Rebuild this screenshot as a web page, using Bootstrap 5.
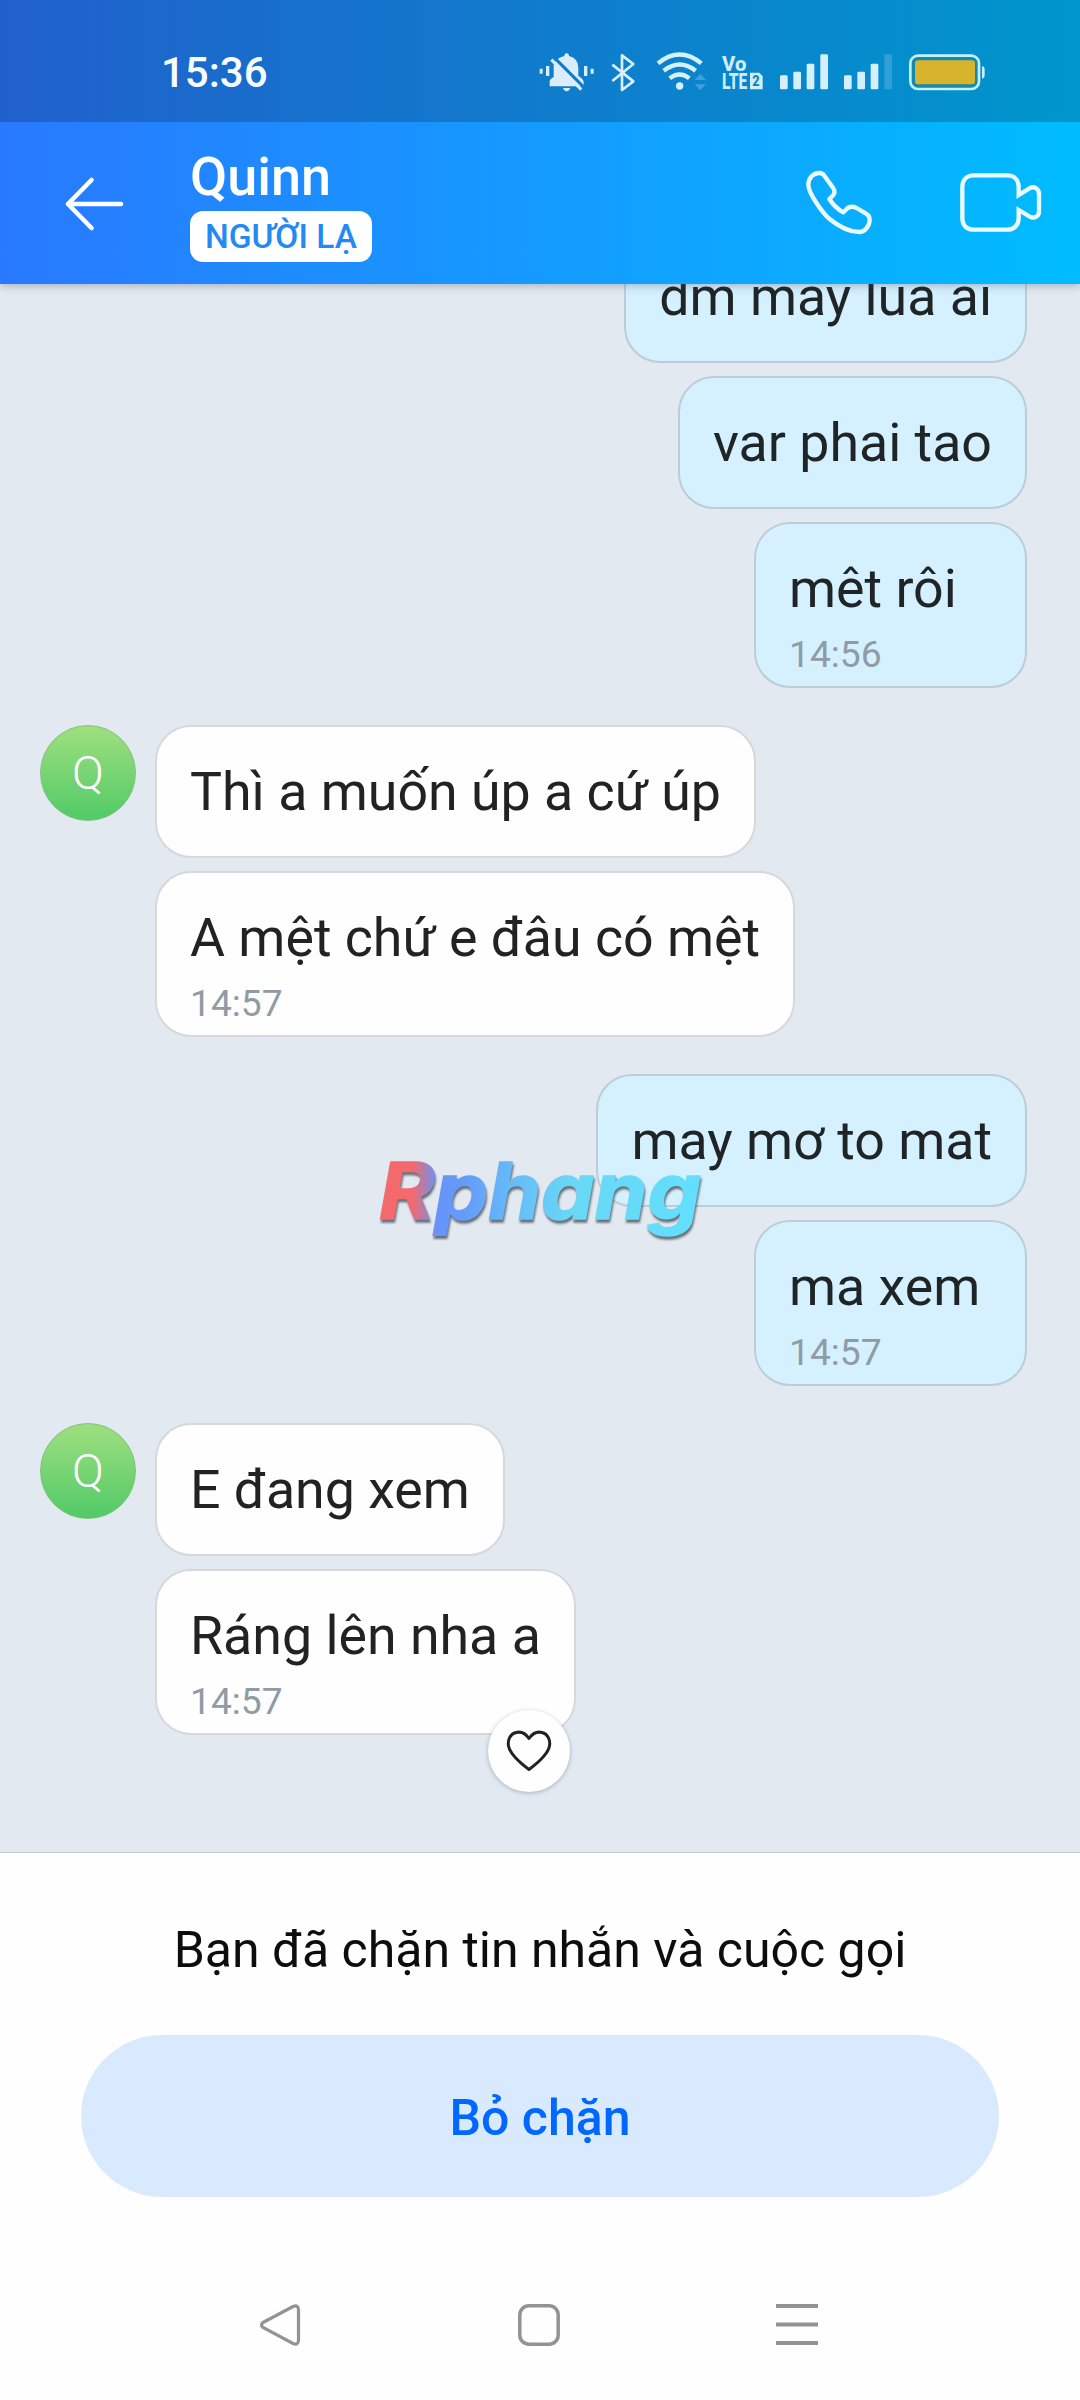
<!DOCTYPE html>
<html lang="vi">
<head>
<meta charset="utf-8">
<meta name="viewport" content="width=device-width, initial-scale=1">
<title>Quinn</title>
<link href="https://cdn.jsdelivr.net/npm/bootstrap@5.3.0/dist/css/bootstrap.min.css" rel="stylesheet">
<style>
  body { width: 1080px; height: 2400px; overflow: hidden; font-family: Roboto, "Noto Sans", sans-serif; background: #fefefe; }
  svg { display: block; flex: none; overflow: visible; }
  .app-top { background: linear-gradient(90deg, #2979ff, #00bcff); box-shadow: 0 2px 8px rgba(60, 80, 100, .35); z-index: 2; }
  .status-bar { height: 122px; background: rgba(0, 0, 0, .2); padding: 22px 95px 0 161px; }
  .clock { font-size: 42px; font-weight: 500; line-height: 50px; padding-top: 2px; color: #f8fdff; }
  .status-icons svg { height: 40px; }
  .chat-header { height: 162px; padding: 0 38px 0 64px; }
  .peer-name { font-size: 54px; font-weight: 500; line-height: 60px; margin-top: 25px; }
  .stranger-tag { width: 182px; height: 51px; border-radius: 13px; font-size: 33.5px; font-weight: 500; line-height: 52px; color: #2389f3; margin-top: 4px; }
  .chat-area { height: 1569px; background: #e2e9f1; padding: 0 53px 117px 40px; gap: 37px; border-bottom: 1px solid #c4cacf; }
  .chat-area > * { flex: none; }
  .bubbles { gap: 13px; }
  .bubble { border: 2px solid #d6d8da; border-radius: 36px; background: #fefefe; padding: 33px; font-size: 53.7px; line-height: 63px; color: #222; white-space: nowrap; }
  .bubble.sent { background: #d5f0ff; border-color: #bccdd8; color: #1f2426; }
  .bubble.timed { padding-bottom: 10px; min-width: 273px; }
  .stamp { font-size: 37.2px; line-height: 44px; margin-top: 12px; color: #8f9ba5; }
  .avatar { width: 96px; height: 96px; margin-right: 19px; background: linear-gradient(#9fdf7f, #52ca68); border: 1px solid #80c47c; font-size: 47px; font-weight: 300; line-height: 94px; flex: none; }
  .react { position: absolute; right: 6px; bottom: -57px; width: 82px; height: 82px; background: #fefefe; box-shadow: 0 1px 4px rgba(50, 70, 100, .35); }
  .watermark { position: absolute; left: 370px; top: 1145px; z-index: 1; filter: drop-shadow(1px 3px 1px rgba(50, 60, 70, .7)); }
  .blocked-panel { height: 343px; padding: 0 81px; }
  .blocked-note { font-size: 50px; line-height: 60px; margin-top: 67px; margin-bottom: 55px; color: #0d0d0d; }
  .unblock { height: 162px; background: #daeafe; color: #0068ff; font-size: 50px; font-weight: 500; border: 0; padding: 5px 0 0; }
  .unblock:hover { background: #daeafe; color: #0068ff; }
  .nav-keys { height: 203px; padding: 107px 262px 0 259px; }
</style>
</head>
<body class="d-flex flex-column position-relative">

<header class="app-top position-relative">
  <div class="status-bar d-flex align-items-center justify-content-between">
    <div class="clock">15:36</div>
    <div class="status-icons d-flex">
      <svg width="57" viewBox="25 65 171 120" fill="#d9edfb">
        <path d="M30 115h9v15h-9zM49 107h10v30h-10zM163 107h10v30h-10zM183 115h9v15h-9z"/>
        <path d="M72 103 Q80 82 104 77 Q104 69 111 69 Q118 69 118 77 Q146 84 146 112 V137 Q160 145 162 155 V168 H60 V152 Q60 148 72 140 Z"/>
        <path d="M100 173h22q-4 10-11 10t-11-10z"/>
        <path d="M71 79 L163 171" stroke="#0e7ccb" stroke-width="9"/>
        <path d="M65 88 L155 178" stroke="#d9edfb" stroke-width="9"/>
      </svg>
      <svg width="25" style="margin-left:16px" viewBox="244 65 75 120" fill="none" stroke="#d9f0fb" stroke-width="8">
        <path d="M248 103 L311 153 L277 179 V75 L311 101 L248 152" stroke-linejoin="round"/>
      </svg>
      <svg width="51" style="margin-left:20px" viewBox="379 65 153 120" fill="none" stroke="#d3f2fd" stroke-width="13">
        <path d="M385 99 Q450 46 515 99M402 121 Q450 84 498 121M420 144 Q450 121 479 144"/>
        <circle cx="450" cy="167" r="11" fill="#d3f2fd" stroke="none"/>
        <path d="M495 149l17-18 17 18zM495 162h34l-17 18z" fill="#3f9fdb" stroke="none"/>
      </svg>
      <svg width="42" style="margin-left:15px" viewBox="577 65 126 120" fill="#cdeefb" font-family="Roboto, sans-serif" font-weight="800">
        <text x="577" y="122" font-size="63" textLength="73" lengthAdjust="spacingAndGlyphs">Vo</text>
        <text x="577" y="177" font-size="66" textLength="76" lengthAdjust="spacingAndGlyphs">LTE</text>
        <path d="M661 127h28l10 11v39h-38z"/>
        <text x="668" y="168" font-size="46" textLength="22" lengthAdjust="spacingAndGlyphs" fill="#0d7fbd">2</text>
      </svg>
      <svg width="48" style="margin-left:16px" viewBox="750 65 144 120" fill="#d6effc">
        <rect x="750" y="135" width="23" height="42" rx="4"/><rect x="790" y="124" width="23" height="53" rx="4"/>
        <rect x="830" y="100" width="23" height="77" rx="4"/><rect x="871" y="72" width="23" height="105" rx="4"/>
      </svg>
      <svg width="48" style="margin-left:16px" viewBox="942 65 144 120" fill="#d6effc">
        <rect x="942" y="135" width="23" height="42" rx="4"/><rect x="982" y="124" width="23" height="53" rx="4"/>
        <rect x="1022" y="100" width="23" height="77" rx="4"/><rect x="1063" y="72" width="23" height="105" rx="4" fill="#2f9fd8"/>
      </svg>
      <svg width="76" style="margin-left:17px" viewBox="1137 65 228 120">
        <rect x="1141" y="76" width="206" height="100" rx="23" fill="#1789ab" stroke="#c3f1fd" stroke-width="8"/>
        <rect x="1155" y="90" width="180" height="72" rx="9" fill="#d8b42c"/>
        <path d="M1356 107q8 2 8 9v20q0 7-8 9z" fill="#c3f1fd"/>
      </svg>
    </div>
  </div>
  <div class="chat-header d-flex text-white">
    <svg width="60" height="54" style="margin-top:55px" viewBox="0 0 60 54" fill="none" stroke="#fff" stroke-width="4.6" stroke-linecap="round" stroke-linejoin="round"><path d="M57 27H4M27.500 3L4 27L27.500 51"/></svg>
    <div style="margin-left:66px">
      <div class="peer-name">Quinn</div>
      <div class="stranger-tag bg-white text-center">NGƯỜI LẠ</div>
    </div>
    <svg class="ms-auto" width="70" height="70" style="margin-top:46px" viewBox="135 115 210 210" fill="none" stroke="#eafbff" stroke-width="13" stroke-linejoin="round">
      <path d="M178 130C160 130 145 145 145 165C145 190 185 245 205 265C235 290 270 307 298 307C315 307 329 288 329 270C329 262 325 256 318 252L290 235C275 228 265 232 258 240L250 248C235 240 217 222 208 208L220 196C225 190 224 182 219 174L193 138C189 132 184 130 178 130Z"/>
    </svg>
    <svg width="82" height="62" style="margin:50px 0 0 85px" viewBox="600 127 246 186" fill="none" stroke="#eafbff" stroke-width="13">
      <path d="M776 196V172C776 150 762 137 742 137H641C620 137 607 151 607 172V266C607 287 620 300 641 300H742C762 300 776 287 776 266V241L808 260C822 268 837 262 837 244V193C837 176 822 168 808 176Z"/>
    </svg>
  </div>
</header>

<main class="chat-area d-flex flex-column justify-content-end overflow-hidden">
  <div class="bubbles d-flex flex-column align-items-end">
    <div class="bubble sent">dm may lua ai</div>
    <div class="bubble sent">var phai tao</div>
    <div class="bubble sent timed">mêt rôi<div class="stamp">14:56</div></div>
  </div>
  <div class="d-flex align-items-start">
    <div class="avatar rounded-circle text-center text-white">Q</div>
    <div class="bubbles d-flex flex-column align-items-start">
      <div class="bubble">Thì a muốn úp a cứ úp</div>
      <div class="bubble timed">A mệt chứ e đâu có mệt<div class="stamp">14:57</div></div>
    </div>
  </div>
  <div class="bubbles d-flex flex-column align-items-end">
    <div class="bubble sent">may mơ to mat</div>
    <div class="bubble sent timed">ma xem<div class="stamp">14:57</div></div>
  </div>
  <div class="d-flex align-items-start">
    <div class="avatar rounded-circle text-center text-white">Q</div>
    <div class="bubbles d-flex flex-column align-items-start">
      <div class="bubble">E đang xem</div>
      <div class="position-relative">
        <div class="bubble timed">Ráng lên nha a<div class="stamp">14:57</div></div>
        <div class="react rounded-circle d-flex align-items-center justify-content-center">
          <svg width="46" height="42" viewBox="0 0 46 42" fill="none" stroke="#222" stroke-width="3" stroke-linejoin="round"><path d="M23 8.500C19 2.500 14 1.500 10 2.500C4 4 1.500 10 2.500 16C4 24 13 32 23 39.500C33 32 42 24 43.500 16C44.500 10 42 4 36 2.500C32 1.500 27 2.500 23 8.500Z"/></svg>
        </div>
      </div>
    </div>
  </div>
</main>

<svg class="watermark" width="350" height="110" viewBox="0 0 350 110">
  <defs><linearGradient id="wm" gradientUnits="userSpaceOnUse" x1="10" y1="0" x2="331" y2="0">
    <stop offset="0" stop-color="#f4696c"/><stop offset=".1" stop-color="#f4696c"/><stop offset=".18" stop-color="#6594fb"/><stop offset=".27" stop-color="#659cfb"/><stop offset=".42" stop-color="#66bdf8"/><stop offset=".6" stop-color="#68d8f6"/><stop offset="1" stop-color="#62dffd"/>
  </linearGradient></defs>
  <text x="9" y="74" font-family="Inter, sans-serif" font-weight="700" font-style="italic" font-size="78" textLength="322" lengthAdjust="spacingAndGlyphs" fill="url(#wm)" stroke="url(#wm)" stroke-width="1.500" stroke-linejoin="miter">Rphang</text>
</svg>

<section class="blocked-panel text-center">
  <div class="blocked-note">Bạn đã chặn tin nhắn và cuộc gọi</div>
  <button class="btn unblock rounded-pill w-100">Bỏ chặn</button>
</section>

<nav class="nav-keys d-flex justify-content-between align-items-start">
  <svg width="42" height="44" viewBox="0 0 42 44" fill="none" stroke="#939393" stroke-width="3.200"><path d="M4 19.500L34 3.500Q39.500 1.500 39.500 7V37Q39.500 42.500 34 40.500L4 24.500Q1 22 4 19.500Z"/></svg>
  <svg width="44" height="44" viewBox="0 0 44 44" fill="none" stroke="#939393" stroke-width="3.500"><rect x="2.800" y="2.800" width="38.400" height="38.400" rx="9"/></svg>
  <svg width="42" height="44" viewBox="0 0 42 44" stroke="#939393" stroke-width="4"><path d="M0 3H42M0 21.500H42M0 40H42"/></svg>
</nav>

<script src="https://cdn.jsdelivr.net/npm/bootstrap@5.3.0/dist/js/bootstrap.bundle.min.js"></script>
</body>
</html>
